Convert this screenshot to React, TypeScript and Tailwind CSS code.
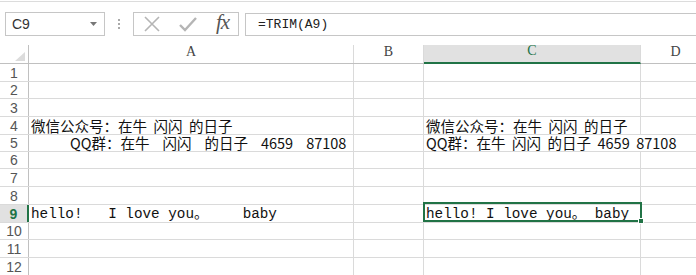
import React from "react";

const rowHeights = [18, 17, 18, 18, 17, 17, 18, 18, 18, 17, 18, 18];

const cjk = "font-['Noto_Sans_CJK_SC',sans-serif] text-[14.5px]";
const mono = "font-['Liberation_Mono','Noto_Sans_CJK_SC',monospace] text-[14.3px]";

type Cells = { a?: React.ReactNode; c?: React.ReactNode; cls?: string; overflowC?: boolean };

const rows: Record<number, Cells> = {
  4: { a: "微信公众号：在牛  闪闪  的日子", c: "微信公众号：在牛  闪闪  的日子", cls: cjk },
  5: {
    a: "            QQ群：在牛    闪闪    的日子    4659    87108",
    c: "QQ群：在牛  闪闪  的日子  4659  87108",
    cls: cjk,
    overflowC: true,
  },
  9: { a: "hello!   I love you。    baby", c: "hello! I love you。 baby", cls: mono },
};

function FormulaBar() {
  return (
    <div className="h-[44px] border-t border-[#dcdcdc] mt-px flex items-start pt-[10px] pl-[5px]">
      <div className="w-[100px] h-[24px] shrink-0 border border-[#c6c6c6] flex items-center justify-between pl-[6px] pr-[7px]">
        <span className="font-['Liberation_Sans',sans-serif] text-[14px] text-[#333]">C9</span>
        <svg width="7" height="4" viewBox="0 0 7 4">
          <path d="M0 0h7L3.5 4z" fill="#777" />
        </svg>
      </div>
      <div className="w-[28px] h-[24px] shrink-0 flex flex-col items-center justify-center gap-[2px]">
        <span className="w-[2px] h-[2px] bg-[#aaa]" />
        <span className="w-[2px] h-[2px] bg-[#aaa]" />
        <span className="w-[2px] h-[2px] bg-[#aaa]" />
      </div>
      <div className="w-[106px] h-[24px] shrink-0 border border-[#c6c6c6] flex items-center pl-[10px] gap-[19px]">
        <svg width="16" height="16" viewBox="0 0 16 16">
          <path d="M1 1L15 15M15 1L1 15" stroke="#b5b5b5" strokeWidth="1.6" />
        </svg>
        <svg width="18" height="16" viewBox="0 0 18 16">
          <path d="M1 9L6 14L17 2" stroke="#b5b5b5" strokeWidth="2.4" fill="none" />
        </svg>
        <span className="font-['Liberation_Serif',serif] italic text-[21px] leading-none text-[#555] -mt-[3px] tracking-[-1px]">
          fx
        </span>
      </div>
      <div className="ml-[6px] flex-1 h-[23px] mt-px border border-r-0 border-[#c6c6c6] flex items-center pl-[12px]">
        <span className="font-['Liberation_Mono',monospace] text-[13px] text-[#222]">=TRIM(A9)</span>
      </div>
    </div>
  );
}

function HeaderRow() {
  const hdr =
    "shrink-0 font-['Liberation_Serif',serif] text-[14px] flex items-end justify-center pb-[1px] border-r border-[#dadada]";
  return (
    <div className="flex h-[19px] border-b border-[#c0c0c0]">
      <div className="w-[29px] shrink-0 border-r border-[#c0c0c0] flex items-end justify-end pr-[3px] pb-[2px]">
        <svg width="10" height="9" viewBox="0 0 10 9">
          <path d="M10 0V9H0z" fill="#dcdcdc" />
        </svg>
      </div>
      <div className={`w-[325px] ${hdr} text-[#444]`}>A</div>
      <div className={`w-[70px] ${hdr} text-[#444]`}>B</div>
      <div className={`w-[217px] ${hdr} bg-[#e1e1e1] text-[#217346] border-b-2 border-b-[#217346] -mb-px`}>C</div>
      <div className={`w-[70px] ${hdr} text-[#444]`}>D</div>
    </div>
  );
}

function Row({ n, h }: { n: number; h: number }) {
  const r = rows[n];
  const sel = n === 9;
  const cell =
    "shrink-0 border-r border-[#dadada] whitespace-pre flex items-end pl-[2px] text-[#111] leading-[16px]";
  return (
    <div className="flex border-b border-[#dadada]" style={{ height: h }}>
      <div
        className={
          sel
            ? "w-[29px] shrink-0 bg-[#e1e1e1] border-r-2 border-[#217346] flex items-end justify-center font-['Liberation_Sans',sans-serif] text-[14px] font-bold text-[#217346] leading-[16px]"
            : "w-[29px] shrink-0 border-r border-[#c0c0c0] flex items-end justify-center font-['Liberation_Sans',sans-serif] text-[14px] text-[#555] leading-[16px]"
        }
      >
        {n}
      </div>
      <div className={`w-[325px] ${cell} ${r?.cls ?? ""}`}>{r?.a}</div>
      <div className={`w-[70px] ${cell}`} />
      <div className={`w-[217px] ${cell} ${r?.overflowC ? "border-r-white" : ""} ${r?.cls ?? ""}`}>{r?.c}</div>
      <div className={`w-[70px] ${cell}`} />
    </div>
  );
}

export default function App() {
  return (
    <div className="w-[696px] h-[275px] overflow-hidden bg-white relative">
      <FormulaBar />
      <HeaderRow />
      {rowHeights.map((h, i) => (
        <Row key={i} n={i + 1} h={h} />
      ))}
      <div className="absolute left-[423px] top-[202px] w-[219px] h-[20px] border-2 border-[#217346] pointer-events-none">
        <span className="absolute -right-[4px] -bottom-[4px] w-[6px] h-[6px] bg-[#217346] border border-white" />
      </div>
    </div>
  );
}
